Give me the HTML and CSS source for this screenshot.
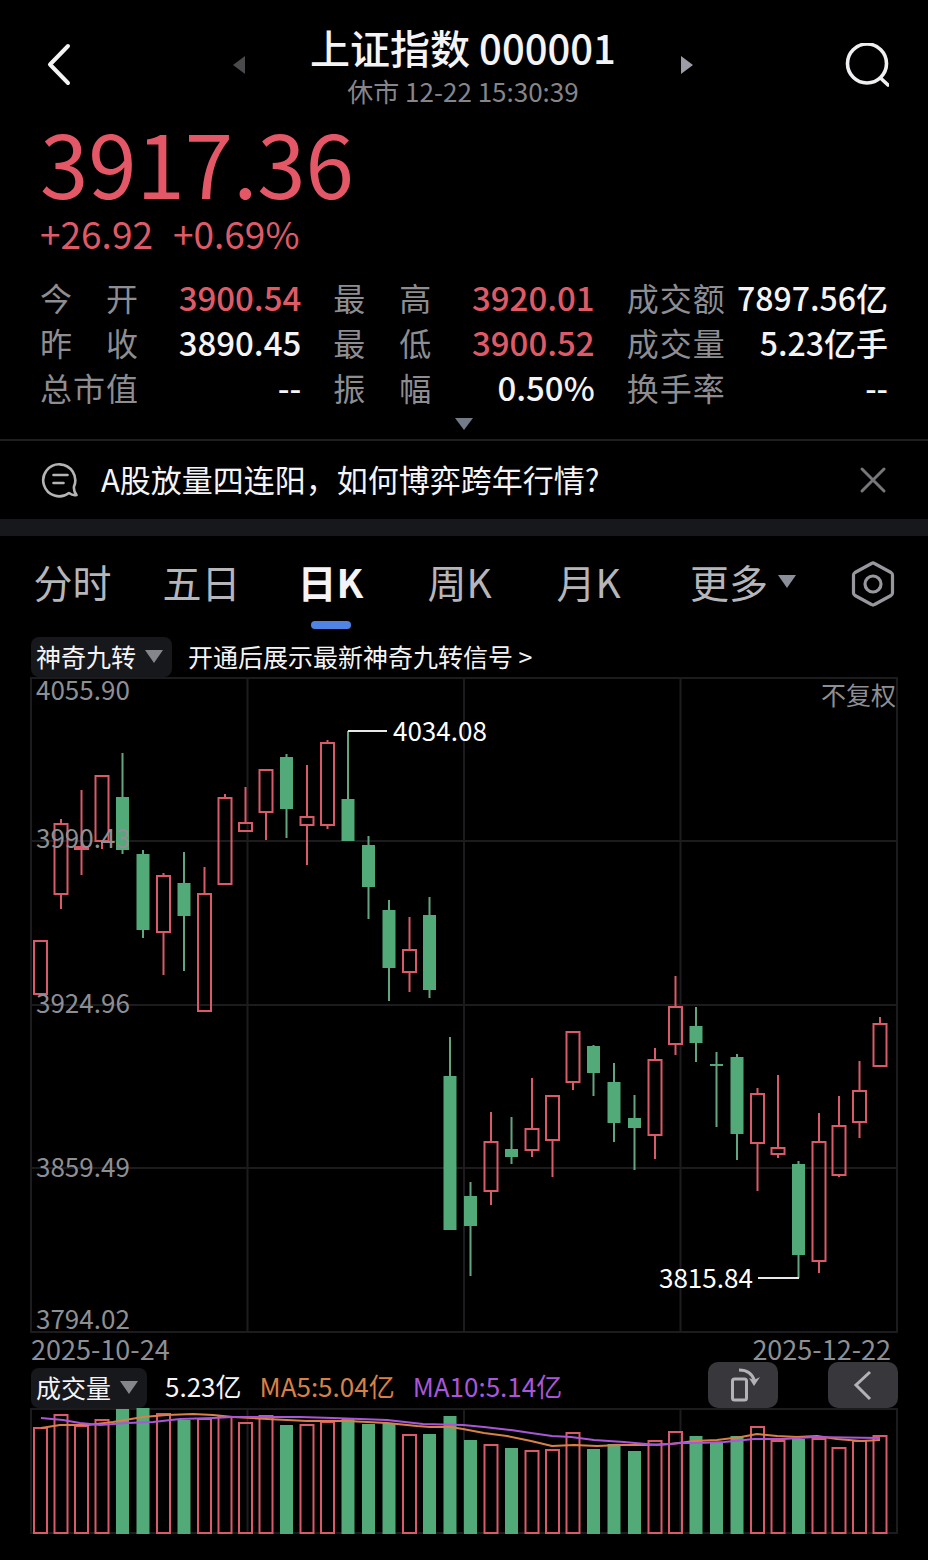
FILE: index.html
```
<!DOCTYPE html>
<html lang="zh-CN">
<head>
    <meta charset="UTF-8">
    <meta name="viewport" content="width=device-width, initial-scale=1">
    <title>上证指数 000001</title>
    <link rel="stylesheet" href="styles.css">
</head>
<body>
    <header class="header">
        <button class="icon-btn" type="button" aria-label="返回">
            <svg width="44" height="44" viewBox="0 0 44 44"><path d="M31 3 L13 21.500 L31 40" fill="none" stroke="#f4f4f6" stroke-width="4" stroke-linecap="round" stroke-linejoin="round"/></svg>
        </button>
        <div class="switcher">
            <button class="icon-btn" type="button" aria-label="上一个">
                <svg width="12" height="18" viewBox="0 0 12 18"><path d="M12 0V18L0 9z" fill="#4a4a4c"/></svg>
            </button>
            <div class="title">
                <h1>上证指数 000001</h1>
                <p>休市 12-22 15:30:39</p>
            </div>
            <button class="icon-btn" type="button" aria-label="下一个">
                <svg width="12" height="18" viewBox="0 0 12 18"><path d="M0 0V18L12 9z" fill="#9c9ca6"/></svg>
            </button>
        </div>
        <button class="icon-btn" type="button" aria-label="搜索">
            <svg width="44" height="44" viewBox="0 0 44 44"><g fill="none" stroke="#f0f0f2" stroke-width="3.600" stroke-linecap="round"><circle cx="22" cy="20.500" r="19.500"/><path d="M36 35.500l7 6.500"/></g></svg>
        </button>
    </header>

    <section class="quote">
        <div class="price">3917.36</div>
        <div class="change"><span>+26.92</span><span>+0.69%</span></div>
        <dl class="stats">
            <div><dt>今 开</dt><dd class="up">3900.54</dd></div>
            <div><dt>最 高</dt><dd class="up">3920.01</dd></div>
            <div><dt>成交额</dt><dd class="amount">7897.56亿</dd></div>
            <div><dt>昨 收</dt><dd>3890.45</dd></div>
            <div><dt>最 低</dt><dd class="up">3900.52</dd></div>
            <div><dt>成交量</dt><dd class="amount">5.23亿手</dd></div>
            <div><dt>总市值</dt><dd>--</dd></div>
            <div><dt>振 幅</dt><dd>0.50%</dd></div>
            <div><dt>换手率</dt><dd class="amount">--</dd></div>
        </dl>
        <button class="icon-btn expand" type="button" aria-label="展开">
            <svg width="18" height="12" viewBox="0 0 18 12"><path d="M0 0H18L9 12z" fill="#737a88"/></svg>
        </button>
    </section>

    <section class="news">
        <svg width="38" height="38" viewBox="0 0 38 38" fill="none" stroke="#b4b4b6" stroke-width="2.600" stroke-linecap="round" stroke-linejoin="round">
            <path d="M33 25.500 A16 16 0 1 0 28 32 C30 33.500 33 34.500 35.500 34 C34 32 32.500 29 33 25.500z"/>
            <path d="M12.500 14h14M12.500 22h10"/>
        </svg>
        <a href="#">A股放量四连阳，如何博弈跨年行情?</a>
        <button class="icon-btn" type="button" aria-label="关闭">
            <svg width="28" height="28" viewBox="0 0 28 28"><path d="M3 3L25 25M25 3L3 25" stroke="#77777a" stroke-width="3" stroke-linecap="round"/></svg>
        </button>
    </section>

    <nav class="tabs">
        <button type="button">分时</button>
        <button type="button">五日</button>
        <button type="button" class="active">日K</button>
        <button type="button">周K</button>
        <button type="button">月K</button>
        <button type="button" class="more">更多<svg width="18" height="13" viewBox="0 0 18 13"><path d="M0 0H18L9 13z" fill="#8b8f99"/></svg></button>
        <button type="button" aria-label="设置">
            <svg width="48" height="56" viewBox="0 0 48 56" fill="none" stroke="#97989d" stroke-width="3.200" stroke-linejoin="round"><path d="M22.500 10.500 Q24 9.500 25.500 10.500 L42 19.500 Q43.500 20.500 43.500 22 V40 Q43.500 41.500 42 42.500 L25.500 51.500 Q24 52.500 22.500 51.500 L6 42.500 Q4.500 41.500 4.500 40 V22 Q4.500 20.500 6 19.500z"/><circle cx="24" cy="31" r="8"/></svg>
        </button>
    </nav>

    <main class="charts">
        <div class="toolbar">
            <div class="picker">
                <select aria-label="主图指标"><option>神奇九转</option></select>
                <svg width="18" height="13" viewBox="0 0 18 13"><path d="M0 0H18L9 13z" fill="#85868c"/></svg>
            </div>
            <a href="#">开通后展示最新神奇九转信号 &gt;</a>
        </div>

        <svg class="chart" viewBox="30 677 868 656">
            <path class="grid" d="M31 678H897V1332H31zM247.500 678V1332M464 678V1332M680.500 678V1332M31 841H897M31 1005H897M31 1168H897"/>
            <g id="candles"></g>
            <path class="mark" d="M348 731H387M758 1278H799"/>
            <g class="axis">
                <text x="36" y="700">4055.90</text>
                <text x="36" y="848">3990.43</text>
                <text x="36" y="1013">3924.96</text>
                <text x="36" y="1177">3859.49</text>
                <text x="36" y="1329">3794.02</text>
                <text class="adjust" x="896" y="705">不复权</text>
            </g>
            <g class="peak">
                <text x="393" y="741">4034.08</text>
                <text x="659" y="1288">3815.84</text>
            </g>
        </svg>
        <div class="dates"><span>2025-10-24</span><span>2025-12-22</span></div>

        <div class="toolbar volume">
            <div class="picker">
                <select aria-label="副图指标"><option>成交量</option></select>
                <svg width="18" height="13" viewBox="0 0 18 13"><path d="M0 0H18L9 13z" fill="#85868c"/></svg>
            </div>
            <span>5.23亿</span>
            <span class="ma5">MA5:5.04亿</span>
            <span class="ma10">MA10:5.14亿</span>
            <div class="actions">
                <button type="button" aria-label="横屏">
                    <svg width="70" height="46" viewBox="0 0 70 46"><rect x="24.500" y="17" width="14" height="21" rx="2" fill="none" stroke="#b3b3b6" stroke-width="3"/><path d="M31 8 C39 8 44.500 12 46.500 19" fill="none" stroke="#b3b3b6" stroke-width="3"/><path d="M41 16 L46 18 L52 15 L46 24z" fill="#b3b3b6"/></svg>
                </button>
                <button type="button" aria-label="收起">
                    <svg width="70" height="46" viewBox="0 0 70 46"><path d="M42 10L28 23L42 37" fill="none" stroke="#b3b3b6" stroke-width="3"/></svg>
                </button>
            </div>
        </div>

        <svg class="chart" viewBox="30 1408 868 127">
            <path class="grid" d="M31 1409H897V1533H31zM247.500 1409V1533M464 1409V1533M680.500 1409V1533"/>
            <g id="volumes"></g>
            <polyline class="line5" points="41,1428 60,1425 88,1425 113,1422 143,1417 167,1415 193,1414 213,1415 233,1417 267,1419 307,1421 347,1421 387,1423 417,1426 430,1427 450,1427 463,1429 484,1433 507,1436 531,1441 552,1446 574,1445 597,1446 621,1445 644,1445 671,1444 694,1441 717,1440 741,1437 757,1434 777,1436 797,1437 817,1436 837,1439 861,1441 880,1440"/>
            <polyline class="line10" points="41,1418 63,1420 80,1423 100,1425 127,1423 153,1422 180,1419 213,1418 233,1417 267,1417 300,1417 333,1418 360,1419 387,1420 423,1424 463,1425 484,1427 511,1430 531,1433 552,1436 571,1437 594,1440 624,1442 657,1445 681,1443 697,1443 724,1442 754,1439 784,1439 814,1437 880,1438"/>
        </svg>
    </main>
    <script src="script.js"></script>
</body>
</html>
```

FILE: styles.css
```
* { box-sizing: border-box; }
body { margin: 0; background: #000; color: #f4f4f6; font-family: "Noto Sans CJK SC", sans-serif; }
button { padding: 0; border: none; background: none; color: inherit; font-family: inherit; cursor: pointer; }
a { color: inherit; text-decoration: none; }
svg { display: block; }
h1, p, dl, dd { margin: 0; }

.header { display: flex; align-items: center; justify-content: space-between; padding: 21px 39px 0 37px; }
.switcher { display: flex; flex: 0 1 460px; align-items: center; justify-content: space-between; }
.title { text-align: center; white-space: nowrap; }
.title h1 { font-size: 40px; line-height: 52px; font-weight: 500; }
.title p { font-size: 26px; line-height: 36px; color: #85858b; }

.quote { padding: 10px 40px 9px; border-bottom: 2px solid #1e1e20; }
.price { font-size: 87px; line-height: 84px; color: #e45766; }
.change { display: flex; gap: 20px; margin: 8px 0 20px; font-size: 37px; line-height: 44px; color: #df5a67; }
.stats { display: grid; grid-template-columns: repeat(3, 1fr); column-gap: 32px; line-height: 45px; }
.stats div { display: flex; justify-content: space-between; white-space: nowrap; }
.stats dt { width: 98px; font-size: 32px; color: #8d8d92; text-align-last: justify; }
.stats dd { font-size: 33px; font-weight: 500; }
.stats .amount { font-size: 32px; }
.stats .up { color: #df5a67; }
.expand { display: block; margin: 8px auto 0; }

.news { display: flex; align-items: center; gap: 22px; padding: 0 41px; height: 78px; font-size: 31px; }
.news a { flex: 1; padding-bottom: 4px; }

.tabs { display: grid; grid-template-columns: repeat(5, 129fr) 180fr 80fr; padding: 17px 15px 28px 8px; border-top: 17px solid #17181c; }
.tabs button { position: relative; display: flex; align-items: center; justify-content: center; height: 56px; font-size: 39px; color: #b6b6ba; white-space: nowrap; }
.tabs .more { gap: 10px; }
.tabs .active { font-weight: 700; color: #f4f4f6; }
.tabs .active::after { content: ""; position: absolute; left: 50%; bottom: -20px; width: 40px; height: 8px; margin-left: -20px; border-radius: 4px; background: #5084e4; }

.charts { padding: 0 30px 25px; }
.toolbar { display: flex; align-items: center; gap: 16px; height: 40px; padding-left: 1px; font-size: 25px; white-space: nowrap; }
.toolbar a { padding-bottom: 3px; }
.picker { position: relative; }
.picker select { display: block; appearance: none; height: 40px; padding: 0 35px 3px 5px; border: none; border-radius: 8px; background: #17181c; color: inherit; font: inherit; }
.picker svg { position: absolute; right: 9px; top: 13px; pointer-events: none; }

.chart { width: 100%; height: auto; overflow: visible; }
.chart text { font-size: 26px; }
.chart .adjust { font-size: 25px; text-anchor: end; }
.grid { fill: none; stroke: #1c1c1e; stroke-width: 2; }
.axis { fill: #8e8f94; }
.peak { fill: #fff; }
.mark { stroke: #e8e8ea; stroke-width: 2; }
.rise { fill: none; stroke: #d95a68; stroke-width: 2; }
.fall { fill: #52aa78; stroke: none; }
.wick-rise { stroke: #d95a68; stroke-width: 2; }
.wick-fall { stroke: #62a680; stroke-width: 2; }
.line5, .line10 { fill: none; stroke-width: 2; stroke-linejoin: round; }
.line5 { stroke: #d98145; }
.line10 { stroke: #a956d8; }

.dates { display: flex; justify-content: space-between; padding: 3px 7px 0 1px; font-size: 27px; line-height: 26px; color: #8e8f94; }
.volume { gap: 18px; height: 46px; font-size: 26px; }
.volume .picker { align-self: flex-end; font-size: 25px; }
.ma5 { color: #d98145; }
.ma10 { color: #a956d8; }
.actions { display: flex; gap: 50px; margin-left: auto; }
.actions button { border-radius: 10px; background: #38383c; }
```

FILE: script.js
```
// [high, body top, body bottom, low, volume top, rising]
const days = [
    [940, 940, 995, 995, 1427, 1],
    [819, 823, 895, 909, 1414, 1],
    [790, 846, 850, 875, 1425, 1],
    [775, 775, 842, 849, 1419, 1],
    [753, 797, 850, 854, 1409, 0],
    [850, 854, 930, 938, 1408, 0],
    [873, 875, 933, 975, 1413, 1],
    [852, 883, 916, 971, 1420, 0],
    [867, 893, 1012, 1012, 1418, 1],
    [794, 797, 885, 885, 1416, 1],
    [787, 822, 832, 832, 1422, 1],
    [769, 769, 813, 840, 1415, 1],
    [754, 757, 809, 838, 1425, 0],
    [765, 816, 826, 865, 1424, 1],
    [740, 742, 826, 829, 1421, 1],
    [731, 799, 841, 841, 1419, 0],
    [836, 845, 887, 919, 1424, 0],
    [900, 910, 968, 1001, 1423, 0],
    [917, 949, 973, 992, 1434, 1],
    [897, 915, 990, 998, 1434, 0],
    [1037, 1076, 1230, 1230, 1416, 0],
    [1182, 1196, 1226, 1276, 1440, 0],
    [1112, 1141, 1192, 1205, 1444, 1],
    [1117, 1149, 1157, 1164, 1448, 0],
    [1078, 1128, 1151, 1157, 1450, 1],
    [1095, 1095, 1141, 1177, 1449, 1],
    [1031, 1031, 1083, 1090, 1432, 1],
    [1045, 1046, 1073, 1096, 1449, 0],
    [1063, 1082, 1123, 1142, 1444, 0],
    [1095, 1118, 1128, 1170, 1451, 0],
    [1048, 1059, 1136, 1159, 1440, 1],
    [976, 1006, 1045, 1055, 1431, 1],
    [1007, 1026, 1043, 1062, 1436, 0],
    [1052, 1064, 1066, 1127, 1442, 0],
    [1054, 1057, 1134, 1160, 1436, 0],
    [1088, 1093, 1144, 1191, 1426, 1],
    [1075, 1147, 1155, 1158, 1440, 1],
    [1161, 1164, 1255, 1278, 1439, 0],
    [1113, 1141, 1262, 1273, 1438, 1],
    [1096, 1125, 1176, 1177, 1447, 1],
    [1061, 1090, 1123, 1138, 1440, 1],
    [1017, 1023, 1067, 1067, 1435, 1]
];

const bar = (x, top, bottom, up) => up
    ? `<rect class="rise" x="${x - 6.5}" y="${top + 1}" width="13" height="${bottom - top - 2}"/>`
    : `<rect class="fall" x="${x - 6.5}" y="${top}" width="13" height="${bottom - top}"/>`;

let candles = "";
let volumes = "";
days.forEach(([high, top, bottom, low, vol, up], i) => {
    const x = Math.round((40.7 + i * 20.475) * 2) / 2;
    const wick = `M${x} ${high}V${top}M${x} ${bottom}V${low}`;
    candles += `<path class="${up ? "wick-rise" : "wick-fall"}" d="${wick}"/>` + bar(x, top, bottom, up);
    volumes += bar(x, vol, 1534, up);
});
document.getElementById("candles").innerHTML = candles;
document.getElementById("volumes").innerHTML = volumes;
```
